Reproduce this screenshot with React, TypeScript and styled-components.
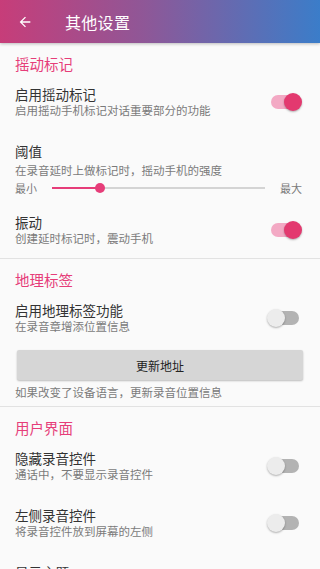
import React from "react";
import styled, { createGlobalStyle } from "styled-components";

const GlobalStyle = createGlobalStyle`
  html, body {
    margin: 0;
    padding: 0;
    background: #fafafa;
  }
  body {
    font-family: "Noto Sans CJK SC", "Noto Sans", Roboto, sans-serif;
  }
  * {
    box-sizing: border-box;
  }
`;

const PINK = "#e63d79";

const Page = styled.div`
  width: 320px;
  height: 569px;
  overflow: hidden;
  background: #fafafa;
  display: flex;
  flex-direction: column;
`;

const Header = styled.div`
  height: 43px;
  flex-shrink: 0;
  display: flex;
  align-items: center;
  background: linear-gradient(90deg, #c73d79 0%, #8f5797 45%, #3b7dc9 100%);
  box-shadow: 0 1px 3px rgba(0, 0, 0, 0.25);
  position: relative;
  z-index: 1;
`;

const BackButton = styled.div`
  width: 52px;
  height: 43px;
  display: flex;
  align-items: center;
  padding-left: 17px;
`;

const HeaderTitle = styled.div`
  margin-left: 13px;
  color: #fff;
  font-size: 16px;
  line-height: 20px;
  letter-spacing: 0.3px;
`;

const Section = styled.div`
  display: flex;
  flex-direction: column;
`;

const SectionTitle = styled.div`
  padding: 12px 15px 0;
  color: ${PINK};
  font-size: 14.5px;
  line-height: 18px;
`;

const Divider = styled.div`
  height: 1px;
  background: #e2e2e2;
  flex-shrink: 0;
`;

const Row = styled.div<{ $bottom?: number }>`
  display: flex;
  align-items: center;
  padding: 12px 18px ${(p) => (p.$bottom ?? 12)}px 15px;
`;

const RowText = styled.div`
  flex: 1;
  display: flex;
  flex-direction: column;
`;

const RowTitle = styled.div`
  color: #333;
  font-size: 13.5px;
  line-height: 18px;
`;

const RowSub = styled.div<{ $gap?: number }>`
  color: #7a7a7a;
  font-size: 11.5px;
  line-height: 15px;
  margin-top: ${(p) => p.$gap ?? 0}px;
`;

const SliderRow = styled.div`
  display: flex;
  align-items: center;
  height: 14px;
  margin-top: 3px;
  color: #7a7a7a;
  font-size: 11px;
`;

const SliderLabel = styled.span`
  width: 37px;
  flex-shrink: 0;
`;

const SliderTrack = styled.div`
  position: relative;
  flex: 1;
  height: 2px;
  background: #d4d4d4;
  margin-right: 15px;
`;

const SliderFill = styled.div`
  position: absolute;
  left: 0;
  top: 0;
  height: 2px;
  background: ${PINK};
`;

const SliderThumb = styled.div`
  position: absolute;
  top: -4px;
  width: 10px;
  height: 10px;
  margin-left: -5px;
  border-radius: 50%;
  background: ${PINK};
`;

const SwitchBox = styled.div`
  position: relative;
  width: 34px;
  height: 20px;
  flex-shrink: 0;
`;

const SwitchTrack = styled.div<{ $on: boolean }>`
  position: absolute;
  left: 3px;
  top: 3px;
  width: 28px;
  height: 14px;
  border-radius: 7px;
  background: ${(p) => (p.$on ? "#f3a9c4" : "#b3b3b3")};
`;

const SwitchThumb = styled.div<{ $on: boolean }>`
  position: absolute;
  top: 1px;
  left: ${(p) => (p.$on ? "16px" : "-1px")};
  width: 18px;
  height: 18px;
  border-radius: 50%;
  background: ${(p) => (p.$on ? "#e3396f" : "#ececec")};
  box-shadow: 0 1px 2px rgba(0, 0, 0, 0.3);
`;

const ButtonWrap = styled.div`
  padding: 4px 17px 0;
`;

const GrayButton = styled.div`
  height: 30px;
  display: flex;
  align-items: center;
  justify-content: center;
  background: #d6d6d6;
  border-radius: 2px;
  box-shadow: 0 1px 2px rgba(0, 0, 0, 0.25);
  color: #222;
  font-size: 12px;
`;

const Note = styled.div`
  padding: 5px 15px 6px;
  color: #7a7a7a;
  font-size: 11.5px;
  line-height: 15px;
`;

const Switch = ({ on }: { on: boolean }) => (
  <SwitchBox>
    <SwitchTrack $on={on} />
    <SwitchThumb $on={on} />
  </SwitchBox>
);

const Pref = ({
  title,
  sub,
  on,
}: {
  title: string;
  sub: string;
  on: boolean;
}) => (
  <Row>
    <RowText>
      <RowTitle>{title}</RowTitle>
      <RowSub>{sub}</RowSub>
    </RowText>
    <Switch on={on} />
  </Row>
);

const App = () => {
  const level = 0.227;
  return (
    <Page>
      <GlobalStyle />
      <Header>
        <BackButton>
          <svg width="16" height="16" viewBox="0 0 24 24">
            <path
              d="M20 11H7.83l5.59-5.59L12 4l-8 8 8 8 1.41-1.41L7.83 13H20v-2z"
              fill="#fff"
            />
          </svg>
        </BackButton>
        <HeaderTitle>其他设置</HeaderTitle>
      </Header>

      <Section>
        <SectionTitle>摇动标记</SectionTitle>
        <Pref title="启用摇动标记" sub="启用摇动手机标记对话重要部分的功能" on />
        <Row $bottom={6}>
          <RowText>
            <RowTitle>阈值</RowTitle>
            <RowSub $gap={3}>在录音延时上做标记时，摇动手机的强度</RowSub>
            <SliderRow>
              <SliderLabel>最小</SliderLabel>
              <SliderTrack>
                <SliderFill style={{ width: `${level * 100}%` }} />
                <SliderThumb style={{ left: `${level * 100}%` }} />
              </SliderTrack>
              <span>最大</span>
            </SliderRow>
          </RowText>
        </Row>
        <Pref title="振动" sub="创建延时标记时，震动手机" on />
      </Section>
      <Divider />

      <Section>
        <SectionTitle>地理标签</SectionTitle>
        <Pref title="启用地理标签功能" sub="在录音章增添位置信息" on={false} />
        <ButtonWrap>
          <GrayButton>更新地址</GrayButton>
        </ButtonWrap>
        <Note>如果改变了设备语言，更新录音位置信息</Note>
      </Section>
      <Divider />

      <Section>
        <SectionTitle>用户界面</SectionTitle>
        <Pref title="隐藏录音控件" sub="通话中，不要显示录音控件" on={false} />
        <Pref title="左侧录音控件" sub="将录音控件放到屏幕的左侧" on={false} />
        <Pref title="显示主题" sub="选择应用的显示主题" on={false} />
      </Section>
    </Page>
  );
};

export default App;
